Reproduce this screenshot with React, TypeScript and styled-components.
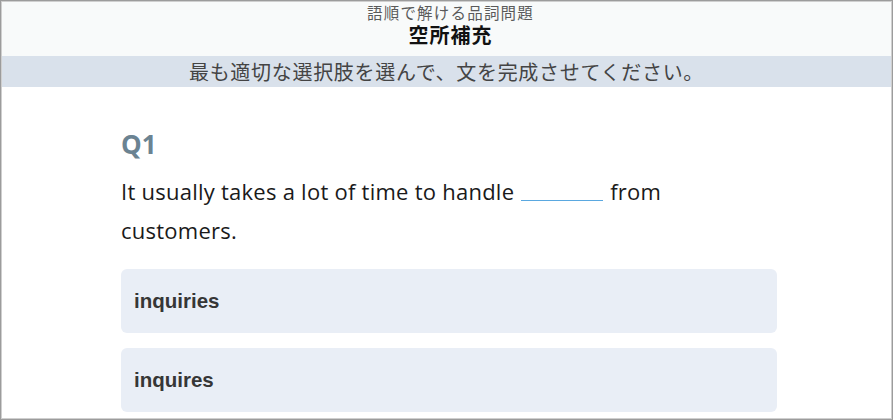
import React from 'react';
import styled, { createGlobalStyle } from 'styled-components';

const GlobalStyle = createGlobalStyle`
    html, body {
        margin: 0;
        padding: 0;
        background: #ffffff;
    }
    * {
        box-sizing: border-box;
    }
`;

const Frame = styled.div`
    width: 893px;
    height: 420px;
    border: 1px solid #9c9c9c;
    box-shadow: inset 0 0 0 1px #cfcfcf;
    overflow: hidden;
    background: #ffffff;
    font-family: "Noto Sans CJK JP", "Liberation Sans", sans-serif;
`;

const Header = styled.header`
    height: 54px;
    margin: 1px 1px 0;
    background: #f8fafa;
    display: flex;
    flex-direction: column;
    align-items: center;
    padding-left: 8px;
`;

const SubTitle = styled.div`
    font-size: 15.5px;
    line-height: 20px;
    letter-spacing: 1.2px;
    color: #5a5a5a;
`;

const Title = styled.h1`
    margin: 0;
    font-size: 20px;
    line-height: 26px;
    letter-spacing: 1px;
    font-weight: 700;
    color: #111111;
`;

const Instruction = styled.div`
    height: 31px;
    margin: 0 1px;
    background: #d9e1eb;
    display: flex;
    align-items: center;
    justify-content: center;
    font-size: 20px;
    letter-spacing: 0.7px;
    color: #444444;
`;

const Content = styled.main`
    width: 656px;
    margin-left: 120px;
    padding-top: 40px;
`;

const QuestionNo = styled.h2`
    margin: 0;
    font-family: "Open Sans", "Liberation Sans", sans-serif;
    font-size: 26px;
    line-height: 34px;
    font-weight: 700;
    color: #6b8392;
`;

const Sentence = styled.p`
    max-width: 600px;
    margin: 11px 0 0;
    font-family: "Open Sans", "Liberation Sans", sans-serif;
    font-size: 22px;
    line-height: 39px;
    letter-spacing: 0.25px;
    color: #1a1a1a;
`;

const Blank = styled.span`
    display: inline-block;
    width: 82px;
    height: 12px;
    margin: 0 1px;
    border-bottom: 1px solid #5aa8e0;
    vertical-align: -1px;
`;

const Options = styled.div`
    margin-top: 19px;
    display: flex;
    flex-direction: column;
    gap: 15px;
`;

const Option = styled.button`
    width: 100%;
    height: 64px;
    border: none;
    border-radius: 6px;
    background: #e9eef6;
    display: flex;
    align-items: center;
    padding: 0 13px;
    font-family: "Liberation Sans", Arial, sans-serif;
    font-size: 20.5px;
    font-weight: 700;
    color: #363636;
    text-align: left;
    cursor: pointer;
`;

const choices = ['inquiries', 'inquires'];

const App: React.FC = () => {
    return (
        <>
            <GlobalStyle />
            <Frame>
                <Header>
                    <SubTitle>語順で解ける品詞問題</SubTitle>
                    <Title>空所補充</Title>
                </Header>
                <Instruction>最も適切な選択肢を選んで、文を完成させてください。</Instruction>
                <Content>
                    <QuestionNo>Q1</QuestionNo>
                    <Sentence>
                        It usually takes a lot of time to handle <Blank /> from customers.
                    </Sentence>
                    <Options>
                        {choices.map((c) => (
                            <Option key={c}>{c}</Option>
                        ))}
                    </Options>
                </Content>
            </Frame>
        </>
    );
};

export default App;
